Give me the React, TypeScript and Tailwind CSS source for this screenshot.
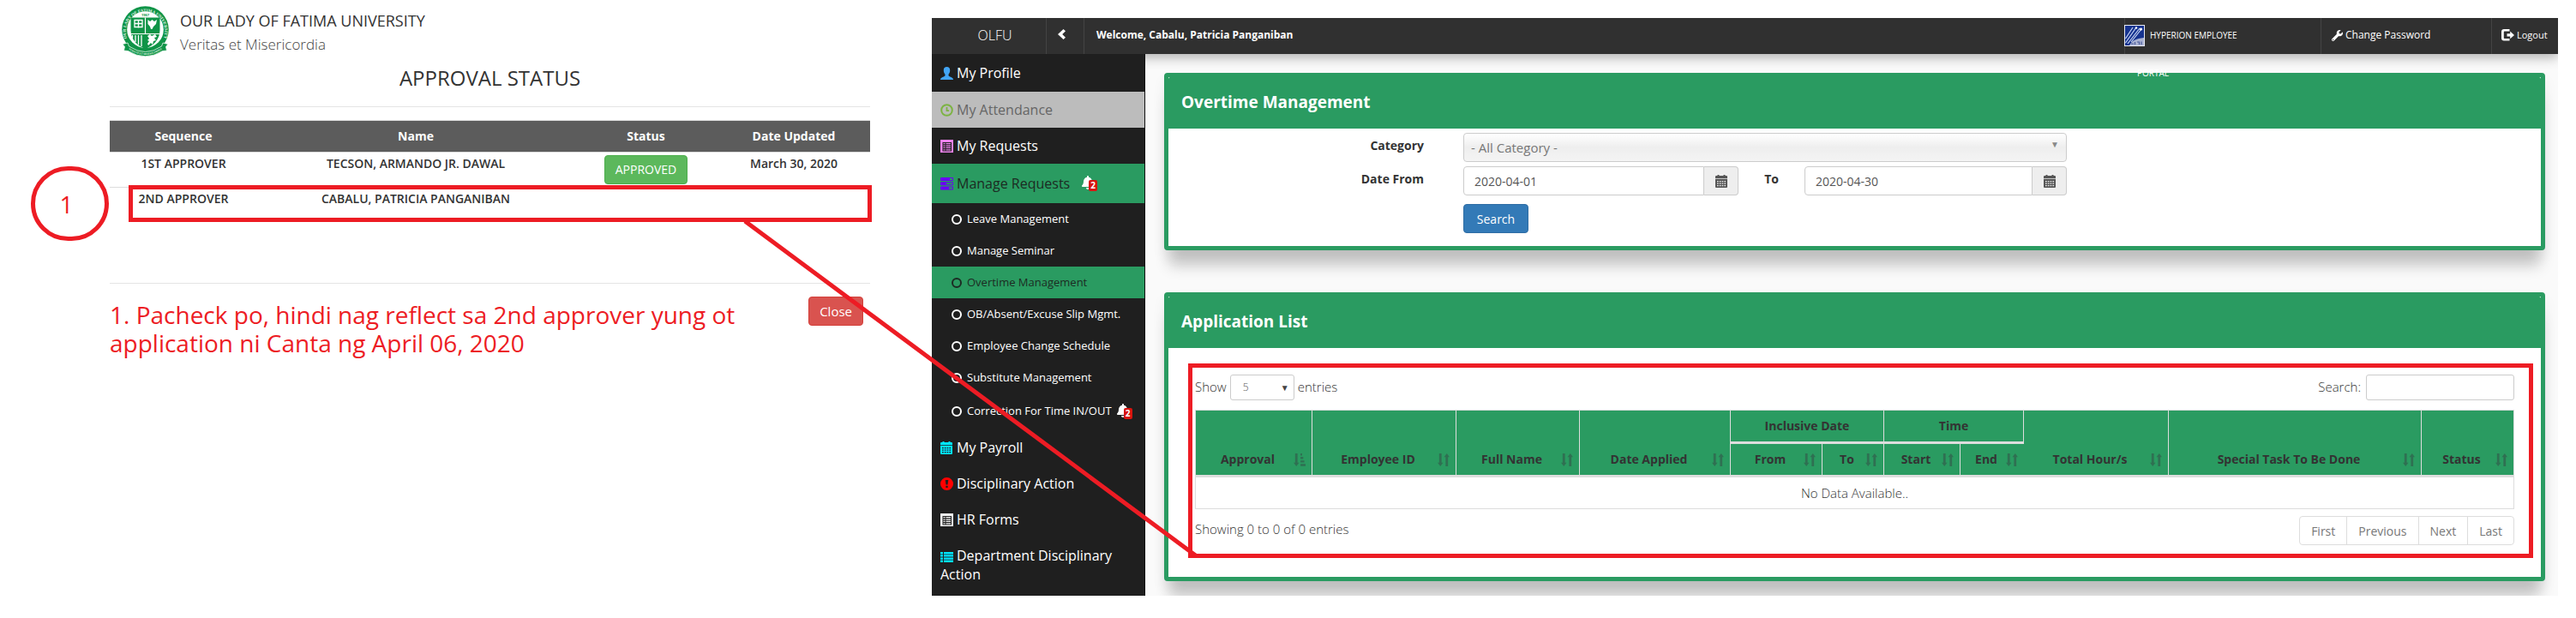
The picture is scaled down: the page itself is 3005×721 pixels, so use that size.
import React from 'react';
import { FaWrench, FaBell } from 'react-icons/fa';

type IconProps = { className?: string };

const UserIcon = ({ className = '' }: IconProps) => (
  <svg viewBox="0 0 15 15" className={`inline-block h-[15px] w-[15px] ${className}`} fill="currentColor">
    <path d="M7.500 0C9.800 0 11.300 1.600 11.200 4c0 1.900-.7 3.700-1.700 4.700v1.500c0 .6 3 1.700 4.200 2.500.9.6 1.300 1.300 1.300 2.300H0c0-1 .4-1.700 1.300-2.300 1.200-.8 4.200-1.900 4.200-2.500V8.700C4.500 7.700 3.800 5.900 3.800 4 3.700 1.600 5.200 0 7.500 0z" />
  </svg>
);

const ClockIcon = ({ className = '' }: IconProps) => (
  <svg viewBox="0 0 15 15" className={`inline-block h-[15px] w-[15px] ${className}`} fill="none" stroke="currentColor" strokeWidth="2">
    <circle cx="7.500" cy="7.500" r="6.300" />
    <path d="M7.500 4v4.200h2.600" strokeWidth="1.800" />
  </svg>
);

const ListAltIcon = ({ className = '' }: IconProps) => (
  <svg viewBox="0 0 15 15" className={`inline-block h-[15px] w-[15px] ${className}`} fill="currentColor">
    <path fillRule="evenodd" d="M0 0h15v15H0zM2.500 3v10.500h10.500V3z" />
    <path d="M3.500 4h2v1.300h-2zM6.500 4h5.500v1.300H6.500zM3.500 6.400h2v1.300h-2zM6.500 6.400h5.500v1.300H6.500zM3.500 8.800h2v1.300h-2zM6.500 8.800h5.500v1.300H6.500zM3.500 11.200h2v1.300h-2zM6.500 11.200h5.500v1.300H6.500z" />
  </svg>
);

const TasksIcon = ({ className = '' }: IconProps) => (
  <svg viewBox="0 0 15 15" className={`inline-block h-[15px] w-[15px] ${className}`} fill="currentColor">
    <path fillRule="evenodd" d="M1 0h13q1 0 1 1v2q0 1-1 1H1q-1 0-1-1V1q0-1 1-1zM11 1h3v2h-3zM1 5.300h13q1 0 1 1v2q0 1-1 1H1q-1 0-1-1v-2q0-1 1-1zM7 6.300h7v2H7zM1 10.600h13q1 0 1 1v2q0 1-1 1H1q-1 0-1-1v-2q0-1 1-1zM10 11.600h4v2h-4z" />
  </svg>
);

const CalendarIcon = ({ className = '' }: IconProps) => (
  <svg viewBox="0 0 14 15" className={`inline-block h-[15px] w-[14px] ${className}`} fill="currentColor">
    <path d="M1 1h1.500V0h2v1h5V0h2v1H13q1 0 1 1v2.200H0V2q0-1 1-1z" />
    <path fillRule="evenodd" d="M0 5h14v9q0 1-1 1H1q-1 0-1-1zM2 7v1.200h1.700V7zM4.800 7v1.200h1.700V7zM7.600 7v1.200h1.700V7zM10.400 7v1.200h1.700V7zM2 9.500v1.200h1.700V9.500zM4.800 9.500v1.200h1.700V9.500zM7.600 9.500v1.200h1.700V9.500zM10.400 9.500v1.200h1.700V9.500zM2 12v1.200h1.700V12zM4.800 12v1.200h1.700V12zM7.600 12v1.200h1.700V12zM10.400 12v1.200h1.700V12z" />
  </svg>
);

const AlertIcon = ({ className = '' }: IconProps) => (
  <svg viewBox="0 0 15 15" className={`inline-block h-[15px] w-[15px] ${className}`} fill="currentColor">
    <path fillRule="evenodd" d="M7.500 0a7.500 7.500 0 1 1 0 15 7.500 7.500 0 0 1 0-15zM5.700 3l.8 5.500h2L9.300 3zM6.300 9.800V12h2.400V9.800z" />
  </svg>
);

const ThListIcon = ({ className = '' }: IconProps) => (
  <svg viewBox="0 0 15 12" className={`inline-block h-[12px] w-[15px] ${className}`} fill="currentColor">
    <path d="M0 0h3v2.400H0zM4 0h11v2.400H4zM0 3.200h3v2.400H0zM4 3.200h11v2.400H4zM0 6.400h3v2.400H0zM4 6.400h11v2.400H4zM0 9.600h3V12H0zM4 9.600h11V12H4z" />
  </svg>
);

const LogoutIcon = () => (
  <svg viewBox="0 0 15 14" className="h-[14px] w-[15px]" fill="currentColor">
    <path d="M3 0h6.500v2.600H3.600q-.8 0-.8.800v6.700q0 .9.800.9h5.900v2.600H3q-3 0-3-3v-7.600Q0 0 3 0z" />
    <path d="M6.500 5.200h3.700V2.500L15 6.900l-4.800 4.400V8.600H6.500z" />
  </svg>
);

const SortIcon = ({ sorted }: { sorted?: boolean }) => (
  <svg viewBox="0 0 13 14" className="absolute right-[7px] bottom-[10px] h-[15px] w-[14px] text-[#2f7052]" fill="currentColor" aria-hidden="true">
    <path d="M1.700 0h2.600v10H6l-3 4-3-4h1.700z" />
    {sorted ? <path d="M7.500 0h1.800v2.300H7.500zM7.500 3.800h3v2.300h-3zM7.500 7.600h4.200v2.300H7.500zM7.500 11.400H13v2.300H7.500z" /> : <path d="M8.700 14h2.600V4H13l-3-4-3 4h1.700z" />}
  </svg>
);

const Bell = ({ count }: { count: number }) => (
  <span className="relative inline-block h-[18px] w-[18px] shrink-0">
    <FaBell className="absolute top-0 left-0 h-[16px] w-[14px] text-white" />
    <span className="absolute right-0 bottom-0 h-[13px] w-[10px] rounded-[2px] bg-[#d8140f] text-center text-[10px] leading-[13px] font-bold text-white">{count}</span>
  </span>
);

const Seal = () => (
  <svg viewBox="0 0 55 59" className="h-[59px] w-[55px]" aria-label="University seal">
    <defs>
      <path id="ring" d="M9.500 43.500A22.800 22.800 0 1 1 45.500 43.500" />
      <path id="ribbon" d="M8 50.500Q27.500 63.500 47 50.500" />
    </defs>
    <circle cx="27.500" cy="27.500" r="27.300" fill="#0f9447" />
    <circle cx="27.500" cy="27.500" r="21.300" fill="#fff" />
    <text fill="#e2f5e9" fontSize="5" fontFamily="Liberation Serif, serif" fontWeight="700">
      <textPath href="#ring" startOffset="50%" textAnchor="middle">OUR LADY OF FATIMA UNIVERSITY</textPath>
    </text>
    <text x="27.500" y="11.800" textAnchor="middle" fill="#0f9447" fontSize="4" fontWeight="700" fontFamily="Open Sans, sans-serif">1967</text>
    <path d="M10.500 13.500H44.500V28C44.500 40 36 46.500 27.500 50 19 46.500 10.500 40 10.500 28z" fill="#0f9447" />
    <path d="M10.500 32.500h34M27.500 13.500v19" stroke="#fff" strokeWidth="1.200" />
    <path d="M12.500 34v3.500M16 34v8M19.500 34v11M23 34v13" stroke="#fff" strokeWidth="1.300" />
    <path d="M15 16.500h9v8h-9zM19.500 16v9.500M14.500 20.500h10" fill="none" stroke="#fff" strokeWidth="1.300" />
    <path d="M30.500 16l2.500 2 2.500-2 2.500 2 3-2-1 5-3 3-1.500 3h-1.500l-1-3-2.500-3z" fill="#fff" />
    <path d="M30 35l3-2 2 2 4-2 2 3-3 1 2 3-3 1-1 4-2-2-3 3-1-2 2-3-2-1 2-2z" fill="#fff" />
    <path d="M1 44.500l6-1.500 1.500 4Q27.500 60 46.500 47l1.500-4 6 1.500-2.500 3 1 4.500-5 .5Q27.500 65 7.500 52.500l-5-.5 1-4.500z" fill="#0f9447" stroke="#fff" strokeWidth=".7" />
    <text fill="#e2f5e9" fontSize="3" fontFamily="Liberation Serif, serif" fontWeight="700">
      <textPath href="#ribbon" startOffset="50%" textAnchor="middle">VERITAS ET MISERICORDIA</textPath>
    </text>
  </svg>
);

const HyperionLogo = () => (
  <svg viewBox="0 0 24 25" className="h-[25px] w-[24px] shrink-0">
    <rect width="24" height="25" fill="#e8eaf2" />
    <rect x="1" y="1" width="22" height="23" fill="#16338f" />
    <path d="M1.500 16L10 3M1.500 21L14 3M4 22L18 4M8 20L20 5" stroke="#c9d6f5" strokeWidth="1.200" />
    <circle cx="14" cy="3.500" r="1.200" fill="#fff" />
    <circle cx="19.500" cy="5" r="1.600" fill="#fff" />
    <path d="M6 24C9 18 14 16 23 15v9z" fill="#a9b2d2" />
    <path d="M8 22h3M12.500 20v3M15 20h2.500v3M20 19.500v3.500" stroke="#4b5b9c" strokeWidth="1.200" fill="none" />
  </svg>
);

const topItems = [
  { label: 'My Profile', icon: <UserIcon className="text-[#42a5f5]" />, box: 'h-[44px] leading-[44px] text-white' },
  { label: 'My Attendance', icon: <ClockIcon className="text-[#7cb342]" />, box: 'h-[42px] leading-[42px] bg-[#bcbcbc] text-[#666]' },
  { label: 'My Requests', icon: <ListAltIcon className="text-[#ee82ee]" />, box: 'h-[42px] leading-[42px] text-white' },
  { label: 'Manage Requests', icon: <TasksIcon className="text-[#6a00f4]" />, box: 'h-[46px] leading-[46px] bg-[#2a9b61] text-[#1c2b23]', count: 2 },
];

const subItems = [
  { label: 'Leave Management' },
  { label: 'Manage Seminar' },
  { label: 'Overtime Management', active: true },
  { label: 'OB/Absent/Excuse Slip Mgmt.' },
  { label: 'Employee Change Schedule' },
  { label: 'Substitute Management' },
  { label: 'Correction For Time IN/OUT', count: 2 },
];

const bottomItems = [
  { label: 'My Payroll', icon: <CalendarIcon className="text-[#00e5ff]" /> },
  { label: 'Disciplinary Action', icon: <AlertIcon className="text-[#ff0000]" /> },
  { label: 'HR Forms', icon: <ListAltIcon className="text-[#f5f5f5]" /> },
  { label: 'Department Disciplinary Action', icon: <ThListIcon className="text-[#00e5ff]" /> },
];

function ApprovalPanel() {
  return (
    <section className="relative w-[1087px] shrink-0 pt-[7px] pr-[72px] pl-[128px]">
      <header className="ml-[14px] flex gap-[13px]">
        <Seal />
        <div className="pt-1 leading-[27px]">
          <h2 className="text-[18px] font-medium text-[#333]">OUR LADY OF FATIMA UNIVERSITY</h2>
          <p className="text-[17px] font-light text-[#444]">Veritas et Misericordia</p>
        </div>
      </header>
      <h1 className="mb-2 text-center text-[24px] leading-[50px] text-[#333]">APPROVAL STATUS</h1>
      <hr className="mb-[15px] border-[#e5e5e5]" />
      <table className="w-full table-fixed border-separate border-spacing-0 text-center text-[14px] leading-5 text-[#333]">
        <colgroup>
          <col className="w-[172px]" />
          <col className="w-[370px]" />
          <col className="w-[167px]" />
          <col className="w-[178px]" />
        </colgroup>
        <thead className="bg-[#5c5c5c] text-white">
          <tr className="h-[38px]">
            {['Sequence', 'Name', 'Status', 'Date Updated'].map((h) => (
              <th key={h} className="border-y border-[#ddd] font-bold">{h}</th>
            ))}
          </tr>
        </thead>
        <tbody className="align-top font-semibold">
          <tr>
            <td className="border-b border-[#ddd] py-[3px]">1ST APPROVER</td>
            <td className="border-b border-[#ddd] py-[3px]">TECSON, ARMANDO JR. DAWAL</td>
            <td className="border-b border-[#ddd] py-[3px]">
              <button className="mx-auto block h-[34px] rounded-[4px] border border-[#4cae4c] bg-[#5cb85c] px-3 font-normal text-white">APPROVED</button>
            </td>
            <td className="border-b border-[#ddd] py-[3px]">March 30, 2020</td>
          </tr>
          <tr className="h-[40px]">
            <td className="py-[3px]">2ND APPROVER</td>
            <td className="py-[3px]">CABALU, PATRICIA PANGANIBAN</td>
            <td />
            <td />
          </tr>
        </tbody>
      </table>
      <hr className="mt-[71px] border-[#e5e5e5]" />
      <div className="flex items-start justify-between pr-2">
        <p className="pt-5 text-[28px] leading-[33px] text-[#ed1c24]">
          1. Pacheck po, hindi nag reflect sa 2nd approver yung ot
          <br />
          application ni Canta ng April 06, 2020
        </p>
        <button className="mt-[15px] h-[34px] rounded-[4px] border border-[#d43f3a] bg-[#d9534f] px-3 text-[15px] text-white">Close</button>
      </div>
      <div className="absolute top-[216px] left-[150px] h-[43px] w-[867px] border-[5px] border-[#ed1c24]" />
      <div className="absolute top-[194px] left-[36px] flex h-[87px] w-[91px] items-center justify-center rounded-full border-[5px] border-[#ed1c24] pr-2 text-[28px] text-[#ed1c24]">1</div>
    </section>
  );
}

function TopBar() {
  return (
    <header className="relative z-10 flex h-[42px] bg-[#303030] text-white shadow-[0_4px_14px_rgba(0,0,0,0.3)]">
      <a href="#home" className="w-[133px] shrink-0 pl-[14px] text-center text-[16px] leading-[40px] font-light">OLFU</a>
      <button aria-label="Collapse menu" className="flex w-[45px] shrink-0 items-center justify-center border-x border-[#444] pr-2 pb-1">
        <svg viewBox="0 0 9 12" className="h-[12px] w-[9px]" fill="currentColor">
          <path d="M6.500 0L9 2.200 5.200 6 9 9.800 6.500 12 0 6z" />
        </svg>
      </button>
      <strong className="flex-1 pl-[14px] text-[12px] leading-[40px] font-bold">Welcome, Cabalu, Patricia Panganiban</strong>
      <a href="#portal" className="relative flex w-[229px] gap-[6px] border-l border-[#444] text-[10px] leading-[40px]">
        <span className="-ml-px pt-2"><HyperionLogo /></span>
        <span>HYPERION EMPLOYEE</span>
        <span className="absolute top-[44px] left-[14px]">PORTAL</span>
      </a>
      <a href="#password" className="flex w-[199px] items-center gap-[3px] border-l border-[#444] pb-[2px] pl-[12px] text-[12px]">
        <FaWrench className="h-[13px] w-[13px]" />
        Change Password
      </a>
      <a href="#logout" className="flex w-[78px] items-center gap-[3px] border-l border-[#444] pb-[2px] pl-[11px] text-[11px]">
        <LogoutIcon />
        Logout
      </a>
    </header>
  );
}

function Sidebar() {
  return (
    <nav className="relative z-20 w-[249px] shrink-0 border-r border-[#111] bg-[#1f1f1f] text-[16px] text-white">
      <ul>
        {topItems.map((i) => (
          <li key={i.label}>
            <a href="#menu" className={`flex items-center gap-[4px] px-[10px] ${i.box}`}>
              {i.icon}
              {i.label}
              {i.count && <span className="ml-[10px] flex"><Bell count={i.count} /></span>}
            </a>
          </li>
        ))}
        {subItems.map((i) => (
          <li key={i.label}>
            <a href="#menu" className={`flex items-center gap-[6px] pl-[23px] text-[13px] ${i.count ? 'h-[42px]' : 'h-[37px]'} ${i.active ? 'bg-[#2a9b61] text-[#1c2b23]' : ''}`}>
              <span className="h-[12px] w-[12px] rounded-full border-[2px] border-current" />
              {i.label}
              {i.count && <span className="flex"><Bell count={i.count} /></span>}
            </a>
          </li>
        ))}
        {bottomItems.map((i) => (
          <li key={i.label}>
            <a href="#menu" className="block px-[10px] py-[10px] leading-[22px]">
              <span className="mr-[4px] inline-flex w-[15px] items-center align-[-2px]">{i.icon}</span>
              {i.label}
            </a>
          </li>
        ))}
      </ul>
    </nav>
  );
}

function Card({ title, children }: { title: string; children: React.ReactNode }) {
  return (
    <section className="rounded-[4px] border-[5px] border-[#2a9b61] bg-white shadow-[0_24px_16px_-6px_rgba(0,0,0,0.2),0_8px_16px_rgba(0,0,0,0.06)]">
      <h3 className="h-[60px] rounded-t-[2px] bg-[#2a9b61] pl-[15px] text-[19px] leading-[58px] font-bold text-white">{title}</h3>
      {children}
    </section>
  );
}

function DateField({ id, value, width }: { id: string; value: string; width: string }) {
  return (
    <div className={`flex h-[34px] ${width}`}>
      <input id={id} defaultValue={value} className="min-w-0 flex-1 rounded-l-[4px] border border-[#ccc] bg-white px-3 text-[14px] text-[#555]" />
      <button type="button" aria-label="Open calendar" className="flex w-[40px] items-center justify-center rounded-r-[4px] border border-l-0 border-[#ccc] bg-[#eee] text-[#555]">
        <CalendarIcon />
      </button>
    </div>
  );
}

function SearchForm() {
  return (
    <form className="grid grid-cols-[298fr_704fr_507fr] gap-x-[46px] gap-y-[5px] pt-[5px] pb-[15px] text-[14px] text-[#333]">
      <label htmlFor="category" className="text-right leading-[30px] font-bold">Category</label>
      <div className="relative col-start-2">
        <select id="category" className="h-[34px] w-full appearance-none rounded-[4px] border border-[#ccc] bg-linear-to-b from-white via-[#eee] via-50% to-[#f4f4f4] px-2 text-[15px] text-[#777]">
          <option>- All Category -</option>
        </select>
        <span className="pointer-events-none absolute top-[5px] right-[9px] text-[10px] leading-[16px] text-[#888]">▼</span>
      </div>
      <label htmlFor="from" className="col-start-1 text-right leading-[30px] font-bold">Date From</label>
      <div className="col-start-2 flex">
        <DateField id="from" value="2020-04-01" width="flex-[321]" />
        <label htmlFor="to" className="w-[77px] pr-[30px] text-right leading-[30px] font-bold">To</label>
        <DateField id="to" value="2020-04-30" width="flex-[306]" />
      </div>
      <div className="col-start-2 pt-[5px]">
        <button type="button" className="h-[34px] w-[76px] rounded-[4px] border border-[#2e6da4] bg-[#337ab7] text-[14px] text-white">Search</button>
      </div>
    </form>
  );
}

function Th({ children, sorted, edge = 'border-r' }: { children: string; sorted?: boolean; edge?: string }) {
  return (
    <th rowSpan={edge === 'border-r' ? 2 : 1} className={`relative border-b-[3px] border-[#ddd] pr-[30px] pb-[8px] pl-4 align-bottom font-bold whitespace-nowrap ${edge}`}>
      {children}
      <SortIcon sorted={sorted} />
    </th>
  );
}

function ApplicationTable() {
  return (
    <table className="w-full table-fixed border-separate border-spacing-0 border-t border-l border-[#ddd] text-center text-[14px] leading-5 text-[#333]">
      <colgroup>
        <col className="w-[136px]" />
        <col className="w-[168px]" />
        <col className="w-[144px]" />
        <col className="w-[176px]" />
        <col className="w-[107px]" />
        <col className="w-[72px]" />
        <col className="w-[89px]" />
        <col className="w-[74px]" />
        <col className="w-[169px]" />
        <col className="w-[295px]" />
        <col className="w-[108px]" />
      </colgroup>
      <thead className="bg-[#2a9b61]">
        <tr className="h-[39px]">
          <Th sorted>Approval</Th>
          <Th>Employee ID</Th>
          <Th>Full Name</Th>
          <Th>Date Applied</Th>
          <th colSpan={2} className="border-r border-b-[3px] border-[#ddd] font-bold">Inclusive Date</th>
          <th colSpan={2} className="border-r border-b-[3px] border-[#ddd] font-bold">Time</th>
          <Th>Total Hour/s</Th>
          <Th>Special Task To Be Done</Th>
          <Th>Status</Th>
        </tr>
        <tr className="h-[39px]">
          <Th edge="border-r border-solid">From</Th>
          <Th edge="border-r border-solid">To</Th>
          <Th edge="border-r border-solid">Start</Th>
          <Th edge="border-r-0">End</Th>
        </tr>
      </thead>
      <tbody>
        <tr className="h-[37px]">
          <td colSpan={11} className="border-r border-b border-[#ddd] text-[15px] font-light">No Data Available..</td>
        </tr>
      </tbody>
    </table>
  );
}

function ApplicationList() {
  return (
    <div className="relative px-[31px] pt-[31px] pb-[37px] text-[15px] font-light text-[#333]">
      <div className="mb-[11px] flex justify-between">
        <label className="flex items-start gap-[4px] leading-[28px]">
          Show
          <span className="relative">
            <select className="block h-[30px] w-[75px] appearance-none rounded-[3px] border border-[#ccc] bg-white px-[14px] text-[12px] text-[#555]">
              <option>5</option>
            </select>
            <span className="pointer-events-none absolute top-[7px] right-[6px] text-[10px] leading-[16px] text-[#444]">▼</span>
          </span>
          entries
        </label>
        <label className="flex items-start gap-[6px] leading-[28px]">
          Search:
          <input type="search" className="h-[30px] w-[173px] rounded-[3px] border border-[#ccc] bg-white px-2" />
        </label>
      </div>
      <ApplicationTable />
      <div className="flex items-start justify-between pt-[8px]">
        <p className="leading-[30px]">Showing 0 to 0 of 0 entries</p>
        <div className="flex h-[34px] divide-x divide-[#ddd] rounded-[4px] border border-[#ddd] text-[14px] font-normal text-[#777]">
          {['First', 'Previous', 'Next', 'Last'].map((p) => (
            <button key={p} className="px-[13px]">{p}</button>
          ))}
        </div>
      </div>
      <div className="pointer-events-none absolute top-[18px] right-[9px] bottom-[22px] left-[23px] border-[5px] border-[#ed1c24]" />
    </div>
  );
}

export default function App() {
  return (
    <div className="relative flex items-start bg-white pb-[26px] font-['Open_Sans',sans-serif]">
      <ApprovalPanel />
      <div className="mt-[21px] mr-[21px] min-w-0 flex-1 overflow-hidden bg-[#fafafa]">
        <TopBar />
        <div className="flex">
          <Sidebar />
          <main className="flex min-w-0 flex-1 flex-col gap-[49px] pt-[22px] pr-[15px] pb-[17px] pl-[22px]">
            <Card title="Overtime Management">
              <SearchForm />
            </Card>
            <Card title="Application List">
              <ApplicationList />
            </Card>
          </main>
        </div>
      </div>
      <svg className="pointer-events-none absolute top-[257px] left-[864px] z-30 h-[396px] w-[536px]" viewBox="0 0 536 396" aria-hidden="true">
        <path d="M5 1L532 392" stroke="#ed1c24" strokeWidth="5" />
      </svg>
    </div>
  );
}
